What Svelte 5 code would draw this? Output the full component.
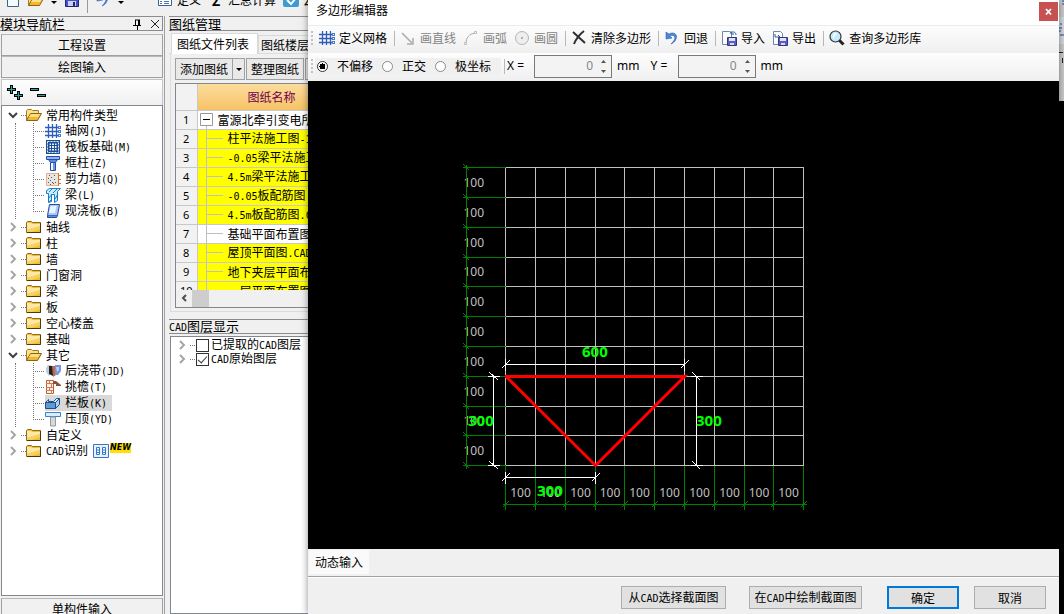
<script>
  const tree = [
    {
      name: '常用构件类型',
      children: [
        { name: '轴网', key: '(J)', icon: 'grid' },
        { name: '筏板基础', key: '(M)', icon: 'raft' },
        { name: '框柱', key: '(Z)', icon: 'column' },
        { name: '剪力墙', key: '(Q)', icon: 'wall' },
        { name: '梁', key: '(L)', icon: 'beam' },
        { name: '现浇板', key: '(B)', icon: 'slab' }
      ]
    },
    { name: '轴线' },
    { name: '柱' },
    { name: '墙' },
    { name: '门窗洞' },
    { name: '梁' },
    { name: '板' },
    { name: '空心楼盖' },
    { name: '基础' },
    {
      name: '其它',
      children: [
        { name: '后浇带', key: '(JD)', icon: 'strip' },
        { name: '挑檐', key: '(T)', icon: 'eave' },
        { name: '栏板', key: '(K)', icon: 'rail', selected: true },
        { name: '压顶', key: '(YD)', icon: 'coping' }
      ]
    },
    { name: '自定义' },
    { name: 'CAD识别', fresh: true }
  ];

  const drawings = [
    { name: '富源北牵引变电所', root: true },
    { name: '柱平法施工图-1', hot: true },
    { name: '-0.05梁平法施工图', hot: true },
    { name: '4.5m梁平法施工图', hot: true },
    { name: '-0.05板配筋图.CAD', hot: true },
    { name: '4.5m板配筋图.CAD', hot: true },
    { name: '基础平面布置图' },
    { name: '屋顶平面图.CADI', hot: true },
    { name: '地下夹层平面布置图', hot: true },
    { name: '一层平面布置图', hot: true }
  ];

  const gx = [197, 227, 257, 287, 316, 346, 376, 406, 436, 465, 495];
  const gy = [86, 116, 146, 176, 205, 235, 265, 295, 325, 354, 384];

  let mode = $state('none');
  let x = $state('0');
  let y = $state('0');

  const parts = (s) => s.match(/[\x20-\x7e]+|[^\x20-\x7e]+/g) ?? [];
  const latin = (s) => /^[\x20-\x7e]/.test(s);
</script>

{#snippet mixed(s)}{#each parts(s) as p}{#if latin(p)}<span class="mono">{p}</span>{:else}{p}{/if}{/each}{/snippet}

{#snippet icon(kind)}
  <svg class="icon" width="16" height="16" viewBox="0 0 16 16" aria-hidden="true">
    {#if kind === 'grid'}
      <path d="M3.500 1v14M7.500 1v14M11.500 1v14M0 4.500h14M0 8.500h14M0 12.500h14" stroke="#2f5cb8" stroke-width="1.300" fill="none" />
      <path d="M13 3h3v3h-3zM13 7h3v3h-3zM13 11h3v3h-3z" fill="#4a78d0" /><path d="M14 4h1v1h-1zM14 8h1v1h-1zM14 12h1v1h-1z" fill="#fff" />
    {:else if kind === 'raft'}
      <path d="M1 1h14v14H1z" fill="#1d4f94" /><path d="M2.500 2.500h11v11h-11z" fill="none" stroke="#e8f2ff" stroke-dasharray="2 1" />
      <path d="M4.500 4.500h7v7h-7z" fill="#e8f2ff" /><path d="M6.500 4v8M9.500 4v8M4 6.500h8M4 9.500h8" stroke="#1d4f94" />
    {:else if kind === 'column'}
      <path d="M1.500 1.500h13v3h-13z" fill="#8fb4f6" stroke="#234da8" /><path d="M3.500 4.500h9l-2 3h-5z" fill="#5f8de4" stroke="#234da8" />
      <path d="M5.500 7.500h5v8h-5z" fill="#f0f6ff" stroke="#234da8" /><path d="M8 8h2v7H8z" fill="#6894e0" />
    {:else if kind === 'wall'}
      <path d="M1.500 2.500h12v12h-12z" fill="#e9e6e2" stroke="#e0ae90" />
      <path d="M3 11h1v1H3zM5 9h1v1H5zM7 11h1v1H7zM6 6h1v1H6zM9 8h1v1H9zM10 11h1v1h-1zM4 4h1v1H4zM9 4h1v1H9zM3 7h1v1H3zM8 12h1v1H8zM5 13h1v1H5z" fill="#555" />
      <path d="M13.500 2v13M13 4.500h3M13 8.500h3M13 12.500h3" stroke="#d8752e" />
    {:else if kind === 'beam'}
      <path d="M1.500 3.500l3-2h11l-3 3v9l-3 2v-8h-3v7l-3 1v-9h-2z" fill="#c9ecff" stroke="#1a7cc4" /><path d="M4 5l3-3M8 6l4-4M4 11l3-4M10 12l3-5M4 15l3-3" stroke="#1a7cc4" />
    {:else if kind === 'slab'}
      <path d="M4.500 1.500h10l-2 11h-10z" fill="#a5caff" stroke="#244d93" /><path d="M5.500 3h6l-1.500 7h-6z" fill="#e8f4ff" /><path d="M2.500 12.500v2h9l1-2" fill="#5d8cd8" stroke="#244d93" />
    {:else if kind === 'strip'}
      <path d="M1 5l2-3h3v9l-2 2-3-4z" fill="#c4cada" /><path d="M4 3h4v10l-4-2z" fill="#222" /><path d="M7 3h4v9l-3 2z" fill="#c46a36" /><path d="M10 2h6v6l-3 4h-3z" fill="#7895dc" /><path d="M11 4h3v3l-2 2z" fill="#bdd0fb" />
    {:else if kind === 'eave'}
      <path d="M1.500 1.500h7v13h-7z" fill="#fff1e8" stroke="#b8623a" /><path d="M1 4.500h8M1 8.500h7M1 11.500h7M4.500 1v4M6.500 4v4M4.500 8v3M6.500 11v4" stroke="#cf7c52" /><path d="M8 2h3l5 4v1h-5V5H8z" fill="#8b5238" />
    {:else if kind === 'rail'}
      <path d="M.5 7.500h10v6H.5z" fill="#5e9bd8" stroke="#1f4e80" /><path d="M10.500 7.500l4-4v6l-4 4z" fill="#a9d2f4" stroke="#1f4e80" /><path d="M.5 7.500l2-2 1-1v2h5l3-3h3l-4 4z" fill="#d2eaff" stroke="#1f4e80" />
    {:else if kind === 'coping'}
      <path d="M.5 1.500h15v4H.5z" fill="#d9edff" stroke="#2f85d0" /><path d="M5.500 6h5v9h-5z" fill="#d8d8d8" stroke="#999" />
    {:else if kind === 'folder'}
      <path d="M.5 3.500l1-1h4l1 1h8v10H.5z" fill="#f0bc3c" stroke="#8f6a1c" /><path d="M1 4h4l1 1h8v2L1 11z" fill="#fde9a4" /><path d="M1 11l13-4v3L5 13H1z" fill="#f8d264" /><path d="M14.500 4v9.500H1" fill="none" stroke="#4c390c" />
    {:else if kind === 'open'}
      <path d="M.5 13.500v-10l1-1h4l1 1h6v3" fill="#fbe08a" stroke="#a67b20" /><path d="M.5 13.500l4-7h11l-4 7z" fill="#f2b830" stroke="#8b6410" /><path d="M5 7h9l-2 3H3z" fill="#fde08a" />
    {:else if kind === 'line'}
      <path d="M2 3l10 10" stroke="#aaa" stroke-width="1.500" /><path d="M13 8v6H7" stroke="#aaa" fill="none" stroke-width="1.500" />
    {:else if kind === 'arc'}
      <path d="M3 13C3 8 6 4 12 3" stroke="#aaa" fill="none" /><path d="M1.500 12.500h2v2h-2zM11.500 1.500h2v2h-2z" fill="#fff" stroke="#bbb" />
    {:else if kind === 'circle'}
      <circle cx="8" cy="8" r="6.500" fill="#eee" stroke="#b5b5b5" /><circle cx="8" cy="8" r="1" fill="#999" />
    {:else if kind === 'clear'}
      <path d="M2 2l12 11M13 1C9 4 5 9 3 14" stroke="#2e2e34" stroke-width="2" fill="none" />
    {:else if kind === 'undo'}
      <path d="M5 4c5-3 9 1 7 5-1 3-3 4-5 5 3-3 5-6 3-8-1-1-3-1-4 0l2 2-6 1V2z" fill="#4d86d6" stroke="#2d60ae" stroke-width=".6" />
    {:else if kind === 'import' || kind === 'export'}
      <path d="M1.500 1.500h7l2 2v11h-9z" fill="#fafcff" stroke="#6f87a8" />
      {#if kind === 'import'}<path d="M15 5c0-3-3-4-5-2M10 1v3h3" stroke="#2d5c9c" fill="none" />{:else}<path d="M3 4v3h5M6 5l2 2-2 2" stroke="#2d5c9c" fill="none" />{/if}
      <path d="M6.500 7.500h9v8h-9z" fill="#5a5fc0" stroke="#33367e" /><path d="M8 8h6v3H8z" fill="#dfe4fb" /><path d="M9 13h4v2H9z" fill="#d8d8e8" />
    {:else if kind === 'find'}
      <circle cx="6.500" cy="6.500" r="5.500" fill="#c4eaff" stroke="#333" stroke-width="1.200" /><path d="M4 9V5l2-2h2z" fill="#fff" /><path d="M10.500 10.500l4 4" stroke="#222" stroke-width="3" />
    {:else if kind === 'page'}
      <path d="M2.500 1.500h11v13h-11z" fill="#f4fbff" stroke="#3e6482" />
    {:else if kind === 'save'}
      <path d="M1.500 1.500h13v13h-13z" fill="#4a4fd0" stroke="#23276e" /><path d="M4 9h8v5H4z" fill="#c9d0f0" /><path d="M9 10h2v4H9z" fill="#23276e" />
    {:else if kind === 'define'}
      <path d="M1.500 1.500h13v12h-13z" fill="#fff" stroke="#3e5f93" /><path d="M3 9.500h2M7 9.500h5M3 11.500h2M7 11.500h5" stroke="#4677b8" />
    {:else if kind === 'check'}
      <rect x="0" y="0" width="16" height="15" rx="2" fill="#3d9bd3" /><path d="M4 8l4 4 5-6" stroke="#fff" fill="none" stroke-width="2" />
    {:else if kind === 'table'}
      <path d="M.5 1.500h15v13H.5z" fill="#e6f2ff" stroke="#3878c0" /><path d="M3.500 4.500h3v7h-3zM9.500 4.500h3v7h-3zM3 7h4M3 9.500h4M9 7h4M9 9.500h4" stroke="#3878c0" fill="#fff" />
    {/if}
  </svg>
{/snippet}

{#snippet chevron(open)}
  <svg class="chevron" width="12" height="16" viewBox="0 0 12 16" aria-hidden="true">
    {#if open}<path d="M2 6l4 4 4-4" stroke="#404040" stroke-width="2" fill="none" />{:else}<path d="M4 4l4 4-4 4" stroke="#a6a6a6" stroke-width="2" fill="none" />{/if}
  </svg>
{/snippet}

{#snippet tool(kind, label, disabled = false)}
  <button class="tool" {disabled}>{@render icon(kind)}<span>{label}</span></button>
{/snippet}

{#snippet spin(id, get, set)}
  <span class="spin">
    <input {id} value={get()} oninput={(e) => set(e.currentTarget.value)} />
    <span class="arrows">
      <button aria-label="+" onclick={() => set(String(+get() + 1))}><svg width="5" height="3" viewBox="0 0 5 3"><path d="M0 3l2.500-3L5 3z" fill="#555" /></svg></button>
      <button aria-label="-" onclick={() => set(String(+get() - 1))}><svg width="5" height="3" viewBox="0 0 5 3"><path d="M0 0l2.500 3L5 0z" fill="#555" /></svg></button>
    </span>
  </span>
{/snippet}

<div class="app">
  <header class="mainbar">
    {@render icon('page')}{@render icon('open')}<i class="caret"></i>{@render icon('save')}<i class="rule"></i>{@render icon('undo')}<i class="caret"></i>
    <span class="pair">{@render icon('define')}<span>定义</span></span>
    <span class="pair"><span class="sum">Σ</span><span>汇总计算</span></span>
    <span class="pair">{@render icon('check')}<span>云检查</span></span>
  </header>

  <div class="body">
    <aside class="nav">
      <h2 class="caption">
        <span>模块导航栏</span>
        <svg width="30" height="12" viewBox="0 0 30 12" aria-hidden="true"><path d="M3 2h5M3.500 2v5M6.500 2v5M7.500 2v5M1 7.500h8M5.500 8v4" stroke="#000" fill="none" /><path d="M19 2l8 8M27 2l-8 8" stroke="#222" fill="none" /></svg>
      </h2>
      <div class="modules">
        <button>工程设置</button>
        <button>绘图输入</button>
      </div>
      <div class="treebar">
        <svg width="40" height="18" viewBox="0 0 40 18" aria-hidden="true">
          <path d="M5.500 1v9M1 5.500h9M12.500 7v9M8 11.500h9M24 5.500h9M31 11.500h9" stroke="#000" stroke-width="3" /><path d="M5.500 2v7M2 5.500h7M12.500 8v7M9 11.500h7M25 5.500h7M32 11.500h7" stroke="#2aa39b" />
        </svg>
      </div>
      <ul class="tree">
        {#each tree as g}
          <li>
            <div class="row">
              {@render chevron(!!g.children)}<i class="dots"></i>{@render icon(g.children ? 'open' : 'folder')}<span class="label">{@render mixed(g.name)}</span>
              {#if g.fresh}<span class="fresh">{@render icon('table')}<b>NEW</b></span>{/if}
            </div>
            {#if g.children}
              <ul class="kids">
                {#each g.children as c, i}
                  <li class="row">
                    <svg width="12" height="16" viewBox="0 0 12 16" aria-hidden="true"><path d={i === g.children.length - 1 ? 'M.5 0v8M0 8.500h12' : 'M.5 0v16M0 8.500h12'} stroke="#777" stroke-dasharray="1 1" fill="none" /></svg>
                    <span class="node" class:selected={c.selected}>{@render icon(c.icon)}<span>{c.name}<span class="mono">{c.key}</span></span></span>
                  </li>
                {/each}
              </ul>
            {/if}
          </li>
        {/each}
      </ul>
      <div class="modules last"><button>单构件输入</button></div>
    </aside>

    <main class="sheets">
      <h2 class="caption"><span>图纸管理</span></h2>
      <div class="tabs">
        <button class="active">图纸文件列表</button>
        <button>图纸楼层对照表</button>
      </div>
      <section class="files">
        <div class="actions">
          <button>添加图纸</button><button class="drop" aria-label="▾"><i class="caret"></i></button><button class="next">整理图纸</button><button class="next">定位图纸</button>
        </div>
        <div class="gridbox">
          <div class="rows">
            <table>
              <thead><tr><th class="num"></th><th class="title">图纸名称</th></tr></thead>
              <tbody>
                {#each drawings as d, i}
                  <tr class:hot={d.hot}>
                    <th class="num">{i + 1}</th>
                    <td>
                      <div class="cell">
                        {#if d.root}
                          <svg width="20" height="19" viewBox="0 0 20 19" aria-hidden="true"><path d="M2.500 3.500h12v12h-12z" fill="#fff" stroke="#999" /><path d="M5 9.500h7" stroke="#000" /><path d="M8.500 16v3" stroke="#c0c0c0" /></svg>
                        {:else}
                          <svg width="30" height="19" viewBox="0 0 30 19" aria-hidden="true"><path d="M8.500 0v19M8 9.500h17" stroke="#c0c0c0" fill="none" /></svg>
                        {/if}
                        <span>{@render mixed(d.name)}</span>
                      </div>
                    </td>
                  </tr>
                {/each}
              </tbody>
            </table>
          </div>
          <div class="hscroll"><svg width="16" height="16" viewBox="0 0 16 16" aria-hidden="true"><path d="M10 5L7 8l3 3" stroke="#505050" stroke-width="2" fill="none" /></svg><i class="thumb"></i></div>
        </div>
      </section>
      <h2 class="caption layers-title"><span>{@render mixed('CAD图层显示')}</span></h2>
      <div class="layers">
        <label>{@render chevron(false)}<i class="dots"></i><input type="checkbox" /><span>{@render mixed('已提取的CAD图层')}</span></label>
        <label>{@render chevron(false)}<i class="dots"></i><input type="checkbox" checked /><span>{@render mixed('CAD原始图层')}</span></label>
      </div>
    </main>
  </div>

  <div class="edge"><svg width="5" height="101" viewBox="0 0 5 101" aria-hidden="true"><path d="M0 17h5v27H0z" fill="#dfe7f2" opacity=".5" /><path d="M3 1h2M3 4h2M1 24h2M0 28h3M0 31h2M1 35h4" stroke="#234b86" /><path d="M0 52.500h4M3.500 58v5" stroke="#222" fill="none" /></svg></div>

  <div class="dialog" role="dialog" aria-labelledby="dlg">
    <div class="titlebar"><h1 id="dlg">多边形编辑器</h1><button class="close" aria-label="×"><svg width="9" height="9" viewBox="0 0 9 9"><path d="M2 2l5 5.500M7 2L2 7.500" stroke="#fff" stroke-width="1.800" /></svg></button></div>
    <div class="bar">
      <i class="grip"></i>
      {@render tool('grid', '定义网格')}<i class="sep"></i>
      {@render tool('line', '画直线', true)}{@render tool('arc', '画弧', true)}{@render tool('circle', '画圆', true)}<i class="sep"></i>
      {@render tool('clear', '清除多边形')}<i class="sep"></i>
      {@render tool('undo', '回退')}<i class="sep"></i>
      {@render tool('import', '导入')}{@render tool('export', '导出')}<i class="sep"></i>
      {@render tool('find', '查询多边形库')}
    </div>
    <div class="bar offsets">
      <i class="grip"></i>
      <div class="modes">
        <label><input type="radio" name="mode" value="none" bind:group={mode} /><span>不偏移</span></label>
        <label><input type="radio" name="mode" value="ortho" bind:group={mode} /><span>正交</span></label>
        <label><input type="radio" name="mode" value="polar" bind:group={mode} /><span>极坐标</span></label>
      </div>
      <i class="sep"></i>
      <div class="field"><label for="ox">X =</label>{@render spin('ox', () => x, (v) => (x = v))}<span>mm</span></div>
      <div class="field"><label for="oy">Y =</label>{@render spin('oy', () => y, (v) => (y = v))}<span>mm</span></div>
    </div>
    <div class="canvas">
      <svg viewBox="0 0 751 468" role="img" aria-labelledby="dlg">
        <g transform="translate(.5 .5)" fill="none" shape-rendering="crispEdges">
          <g fill="#c0c0c0" stroke="none" class="dim">
            {#each gy.slice(1) as v, i}<text x="155" y={(v + gy[i]) / 2 + 4}>100</text>{/each}
            {#each gx.slice(1) as v, i}<text x={(v + gx[i]) / 2} y="415" text-anchor="middle">100</text>{/each}
          </g>
          <g stroke="#c0c0c0">
            {#each gx as v}<path d={`M${v} 86V384`} />{/each}
            {#each gy as v}<path d={`M197 ${v}H495`} />{/each}
          </g>
          <g stroke="#008000">
            <path d="M158 83V387M194 423H498" />
            {#each gy as v}<path d={`M154 ${v}H197M155 ${v - 3}l6 6`} />{/each}
            {#each gx as v}<path d={`M${v} 384V428M${v - 3} 426l6-6`} />{/each}
          </g>
          <g stroke="#fff">
            <path d="M197 283H376M197 277v12M376 277v12M193 287l8-8M372 287l8-8" />
            <path d="M197 396H287M197 390v12M287 390v12M193 400l8-8M283 400l8-8" />
            <path d="M185 295V384M179 295h12M179 384h12M181 291l9 8M181 380l9 8" />
            <path d="M388 295V384M382 295h12M382 384h12M384 291l8 8M384 380l8 8" />
          </g>
        </g>
        <path d="M197 295.500H376.500L287.500 384.500L198 295.500" fill="none" stroke="#f00" stroke-width="3" />
        <g fill="#0f0" class="size">
          <text x="274" y="276">600</text><text x="160" y="345">300</text><text x="388" y="345">300</text><text x="229" y="415">300</text>
        </g>
      </svg>
    </div>
    <div class="status"><button>动态输入</button></div>
    <div class="foot">
      <button class="w1">{@render mixed('从CAD选择截面图')}</button>
      <button class="w2">{@render mixed('在CAD中绘制截面图')}</button>
      <button class="w3 ok">确定</button>
      <button class="w3">取消</button>
    </div>
  </div>
</div>

<style>
  :global(body) { margin: 0; overflow: hidden; }
  .app, .app * { box-sizing: border-box; }
  .app { position: relative; height: 100vh; display: flex; flex-direction: column; overflow: hidden; background: #f0f0f0; color: #000; font: 12px/16px "Noto Sans CJK SC", sans-serif; white-space: nowrap; }
  button, input { font: inherit; color: inherit; margin: 0; padding: 0; border: 0; background: none; border-radius: 0; }
  h1, h2, ul { margin: 0; padding: 0; font-weight: normal; list-style: none; }
  svg { display: block; flex: none; }
  i { flex: none; }
  .mono { font-family: "DejaVu Sans Mono", monospace; font-size: 10px; }

  .mainbar { flex: none; height: 13px; display: flex; align-items: flex-end; gap: 7px; padding: 0 0 5px 5px; overflow: hidden; }
  .caret { width: 0; height: 0; border: 3px solid transparent; border-top-color: #000; border-bottom: 0; margin-bottom: 4px; }
  .rule { width: 1px; height: 20px; background: #999; margin-bottom: -5px; }
  .pair { display: flex; gap: 4px; }
  .pair:first-of-type { margin-left: 26px; }
  .sum { width: 16px; text-align: center; font-weight: bold; font-size: 14px; }

  .body { flex: 1; min-height: 0; display: flex; gap: 4px; padding-top: 3px; }
  .nav { width: 165px; flex: none; display: flex; flex-direction: column; border-right: 1px solid #a0a0a0; padding-right: 1px; }
  .caption { flex: none; height: 15px; display: flex; align-items: center; justify-content: space-between; border: 1px solid #8c8c8c; border-left: 0; font-size: 13px; line-height: 13px; }
  .modules { padding: 1px 0 0 1px; margin-top: 2px; }
  .modules button { display: block; width: 100%; height: 22px; border: 1px solid #a0a0a0; border-top-color: #b8b8b8; background: #f1f1f1; }
  .treebar { flex: none; height: 26px; margin-left: 1px; padding: 4px; border: 1px solid #c4c4c4; border-bottom: 0; background: linear-gradient(#fefefe, #f0f0f0); margin-top: 1px; }
  .tree { flex: 1; min-height: 0; overflow: hidden; margin-left: 1px; padding: 1px 0 0 5px; border: 1px solid #828790; background: #fff; }
  .row { display: flex; align-items: center; height: 16px; }
  .dots { width: 5px; margin-left: 2px; border-top: 1px dotted #777; }
  .label { margin-left: 4px; }
  .kids { margin-left: 8px; padding-left: 17px; border-left: 1px dotted #777; }
  .node { display: flex; align-items: center; gap: 4px; height: 16px; padding: 0 5px 0 0; }
  .selected { background: #d9d9d9; }
  .fresh { display: flex; align-items: flex-start; margin-left: 5px; gap: 1px; }
  .fresh b { font: italic bold 8px/10px "DejaVu Sans", sans-serif; background: #ffe000; }
  .last { flex: none; height: 17px; overflow: hidden; margin-top: 1px; }

  .sheets { flex: 1; min-width: 0; display: flex; flex-direction: column; }
  .tabs { flex: none; display: flex; align-items: flex-end; height: 22px; margin-top: 1px; padding-left: 2px; border-bottom: 1px solid #dcdcdc; }
  .tabs button { height: 18px; padding: 0 4px; border: 1px solid #d9d9d9; border-bottom: 0; }
  .tabs .active { height: 21px; width: 87px; background: #fff; margin-bottom: -1px; padding: 0 5px; text-align: left; }
  .tabs button:last-child { padding: 0 2px; }
  .files { flex: none; margin-left: 1px; padding: 4px 4px 3px; border: 1px solid #dcdcdc; border-top: 0; background: #f0f0f0; }
  .actions { display: flex; height: 23px; }
  .actions button { width: 58px; height: 22px; border: 1px solid #a0a0a0; background: #e9e9e9; }
  .actions .drop { width: 13px; margin-left: -1px; display: flex; align-items: center; justify-content: center; }
  .drop .caret { margin: 0; }
  .actions .next { margin-left: 1px; }
  .gridbox { margin-top: 2px; border: 1px solid #828790; background: #fff; }
  .rows { height: 206px; overflow: hidden; }
  table { width: 100%; border-collapse: collapse; table-layout: fixed; }
  th, td { padding: 0; font-weight: normal; height: 19px; border-bottom: 1px solid #c8c8c8; }
  .num { width: 21px; background: #f2f2f2; border-right: 1px solid #c8c8c8; font-family: "Noto Sans", sans-serif; font-size: 11px; line-height: 14px; }
  thead th { height: 26px; }
  .title { background: linear-gradient(#fbdc9d, #f5c265); color: #700050; text-align: left; padding-left: 50px; }
  .cell { display: flex; align-items: center; height: 18px; overflow: hidden; }
  .hot td { background: #ff0; }
  .hscroll { display: flex; height: 17px; background: #f0f0f0; }
  .thumb { width: 17px; background: #cdcdcd; }
  .layers-title { margin-top: 7px; }
  .layers { flex: 1; margin-top: 2px; padding: 1px 0 0 5px; margin-left: 1px; border: 1px solid #828790; background: #fff; }
  .layers label { display: flex; align-items: center; height: 14px; }
  .layers input { appearance: none; width: 13px; height: 13px; margin: 0 2px 0 1px; border: 1px solid #333; background: #fff; flex: none; }
  .layers input:checked { display: grid; place-items: center; }
  .layers input:checked::after { content: ""; width: 8px; height: 4px; border: solid #333; border-width: 0 0 1px 1px; transform: rotate(-48deg); margin-top: -2px; }

  .edge { position: absolute; top: 0; right: 0; bottom: 0; width: 50%; display: flex; justify-content: flex-end; background: linear-gradient(#cbcbcb 101px, #000 101px); }

  .dialog { position: absolute; inset: 0 5px 0 308px; display: flex; flex-direction: column; background: #f0f0f0; box-shadow: 0 0 7px rgba(0, 0, 0, .45); }
  .titlebar { flex: none; height: 26px; display: flex; justify-content: space-between; padding: 2px 1px 0 8px; background: #fff; border-bottom: 1px solid #ececec; }
  h1 { font-size: 12px; line-height: 16px; }
  .close { width: 19px; height: 19px; background: #c75050; display: grid; place-items: center; }
  .bar { flex: none; height: 27px; display: flex; align-items: center; padding-bottom: 3px; background: linear-gradient(#fdfdfd, #efefef); }
  .offsets { height: 28px; padding-bottom: 2px; }
  .grip { width: 2px; height: 15px; margin: 0 6px 0 3px; background: repeating-linear-gradient(#c2c2c2 0 2px, transparent 2px 4px); }
  .tool { display: flex; align-items: center; gap: 4px; margin-right: 7px; }
  .tool:disabled { color: #838383; }
  .sep { width: 1px; height: 15px; margin-right: 5px; background: #b8b8b8; }
  .modes { display: flex; gap: 9px; height: 17px; margin-left: -4px; padding: 0 10px 0 2px; background: #f0f0f0; }
  .modes label { display: flex; align-items: center; gap: 9px; }
  .modes input { appearance: none; width: 11px; height: 11px; border: 1px solid #8a8a8a; border-radius: 50%; background: #fff; }
  .modes input:checked { border-color: #333; background: radial-gradient(#000 0 3px, #fff 3px); }
  .offsets .sep { margin: 0 2px 0 3px; }
  .field { display: flex; align-items: center; gap: 5px; margin-right: 11px; font-family: "Noto Sans", sans-serif; }
  .field label { width: 22px; }
  .spin { display: flex; width: 78px; height: 23px; border: 1px solid #7a7a7a; background: #f3f3f3; }
  .spin input { flex: 1; min-width: 0; padding-right: 3px; text-align: right; color: #888; outline: 0; }
  .arrows { display: flex; flex-direction: column; justify-content: space-between; width: 15px; align-items: center; padding: 4px 0; }
  .arrows button { line-height: 0; }
  .canvas { flex: 1; min-height: 0; background: #000; }
  .canvas svg { width: 100%; height: 100%; }
  .dim { font: 12px "Noto Sans", sans-serif; }
  .size { font: bold 15px "Noto Sans", sans-serif; }
  .status { flex: none; height: 28px; padding: 1px; border-bottom: 1px solid #a0a0a0; }
  .status button { height: 24px; padding: 0 6px; background: #fafafa; }
  .foot { flex: none; height: 37px; display: flex; justify-content: flex-end; align-items: flex-start; padding: 8px 13px 0; border-top: 1px solid #fff; }
  .foot button { height: 23px; border: 1px solid #adadad; background: #e1e1e1; }
  .foot .w1 { width: 105px; margin-right: 23px; }
  .foot .w2 { width: 113px; margin-right: 25px; }
  .foot .w3 { width: 72px; }
  .foot .ok { border: 2px solid #0078d7; margin-right: 15px; }
</style>
